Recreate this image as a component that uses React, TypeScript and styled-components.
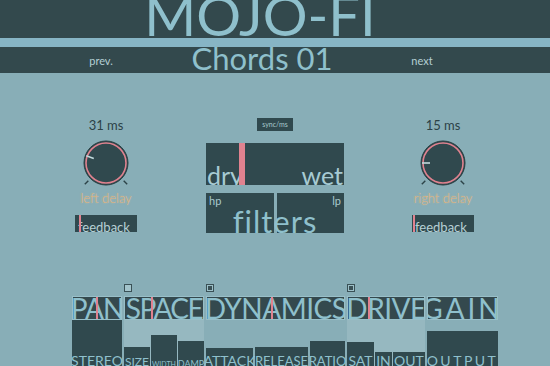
import React from 'react';
import styled, { createGlobalStyle } from 'styled-components';

const DARK = '#30494e';
const LIGHT = '#8fc0cc';
const PINK = '#e0828f';

const GlobalStyle = createGlobalStyle`
  html, body { margin: 0; padding: 0; background: #88aeb7; }
  body { font-family: Lato, "Noto Sans", sans-serif; overflow: hidden; }
`;

type Section = {
  name: string;
  width: number;
  spacing: number;
  check?: 'empty' | 'on';
  tinted?: boolean;
  marker?: number;
  bars: { label: string; w: number; h: number; size: number; ls?: number }[];
};

const sections: Section[] = [
  { name: 'PAN', width: 50, spacing: -1, marker: 23, bars: [{ label: 'STEREO', w: 50, h: 46, size: 14 }] },
  {
    name: 'SPACE', width: 80, spacing: -1.5, check: 'empty', tinted: true, marker: 26,
    bars: [
      { label: 'SIZE', w: 26, h: 19, size: 12 },
      { label: 'WIDTH', w: 26, h: 31, size: 7 },
      { label: 'DAMP', w: 26, h: 25, size: 9 },
    ],
  },
  {
    name: 'DYNAMICS', width: 139, spacing: -0.5, check: 'on', marker: 64,
    bars: [
      { label: 'ATTACK', w: 47, h: 18, size: 14 },
      { label: 'RELEASE', w: 53, h: 19, size: 13 },
      { label: 'RATIO', w: 35, h: 25, size: 13 },
    ],
  },
  {
    name: 'DRIVE', width: 78, spacing: -0.5, check: 'on', tinted: true, marker: 20,
    bars: [
      { label: 'SAT', w: 27, h: 24, size: 14 },
      { label: 'IN', w: 17, h: 14, size: 14 },
      { label: 'OUT', w: 32, h: 14, size: 14 },
    ],
  },
  { name: 'GAIN', width: 71, spacing: 3, bars: [{ label: 'OUTPUT', w: 71, h: 35, size: 14, ls: 2.5 }] },
];

function Knob({ angle }: { angle: number }) {
  const cx = 28;
  const cy = 24;
  const pt = (r: number, deg: number) => {
    const a = (deg * Math.PI) / 180;
    return [cx + r * Math.cos(a), cy + r * Math.sin(a)];
  };
  const [p1x, p1y] = pt(13, angle);
  const [p2x, p2y] = pt(21, angle);
  const [t1x, t1y] = pt(25, 135);
  const [t2x, t2y] = pt(30, 135);
  const [t3x, t3y] = pt(25, 45);
  const [t4x, t4y] = pt(30, 45);
  return (
    <svg width="56" height="52" viewBox="0 0 56 52">
      <circle cx={cx} cy={cy} r="22" fill={DARK} stroke="#283d41" strokeWidth="1" />
      <circle cx={cx} cy={cy} r="20" fill="none" stroke={PINK} strokeWidth="1.6" />
      <line x1={p1x} y1={p1y} x2={p2x} y2={p2y} stroke="#c2dadd" strokeWidth="1.6" />
      <line x1={t1x} y1={t1y} x2={t2x} y2={t2y} stroke="#2c4348" strokeWidth="1.4" />
      <line x1={t3x} y1={t3y} x2={t4x} y2={t4y} stroke="#2c4348" strokeWidth="1.4" />
    </svg>
  );
}

function DelayColumn({ value, label, angle, marker }: { value: string; label: string; angle: number; marker: number }) {
  return (
    <SideColumn>
      <Value>{value}</Value>
      <Knob angle={angle} />
      <DelayLabel>{label}</DelayLabel>
      <Feedback>
        <Marker $left={marker} />
        <FeedbackText>feedback</FeedbackText>
      </Feedback>
    </SideColumn>
  );
}

export default function App() {
  return (
    <Page>
      <GlobalStyle />
      <TitleBar>
        <Title>MOJO-FI</Title>
      </TitleBar>
      <Stripe />
      <PresetBar>
        <NavText>prev.</NavText>
        <Preset>Chords 01</Preset>
        <NavText>next</NavText>
      </PresetBar>

      <Main>
        <DelayColumn value="31 ms" label="left delay" angle={200} marker={4} />
        <CenterColumn>
          <SyncButton>sync/ms</SyncButton>
          <DryWet>
            <Big>dry</Big>
            <Big>wet</Big>
            <MixBar />
          </DryWet>
          <Filters>
            <FilterPanel>hp</FilterPanel>
            <FilterPanel $right>lp</FilterPanel>
            <FiltersTitle>filters</FiltersTitle>
          </Filters>
        </CenterColumn>
        <DelayColumn value="15 ms" label="right delay" angle={180} marker={1} />
      </Main>

      <Strip>
        {sections.map((s) => (
          <Module key={s.name} $width={s.width}>
            <CheckRow>{s.check && <Check $on={s.check === 'on'} />}</CheckRow>
            <Header $spacing={s.spacing}>
              {s.name}
              {s.marker !== undefined && <HeaderMarker $left={s.marker} />}
            </Header>
            <Body $tinted={!!s.tinted}>
              {s.bars.map((b) => (
                <Bar key={b.label} $w={b.w} $h={b.h}>
                  <BarLabel $size={b.size} $ls={b.ls ?? 0}>{b.label}</BarLabel>
                </Bar>
              ))}
            </Body>
          </Module>
        ))}
      </Strip>
    </Page>
  );
}

const Page = styled.div`
  width: 550px;
  height: 366px;
  overflow: hidden;
  background: #88aeb7;
`;

const TitleBar = styled.div`
  height: 38px;
  background: #33494d;
  display: flex;
  justify-content: center;
  align-items: flex-end;
  overflow: hidden;
`;

const Title = styled.div`
  font-size: 56px;
  font-weight: 400;
  line-height: 1;
  color: ${LIGHT};
  margin-bottom: -5px;
  margin-right: 30px;
`;

const Stripe = styled.div`
  height: 9px;
  background: #87b5c5;
`;

const PresetBar = styled.div`
  height: 26px;
  background: #33494d;
  display: grid;
  grid-template-columns: 82px 240px 80px;
  padding-left: 60px;
  justify-items: center;
  align-items: center;
`;

const NavText = styled.span`
  font-size: 11px;
  color: #b4cfd4;
  margin-top: 1px;
`;

const Preset = styled.span`
  font-size: 31px;
  font-weight: 400;
  line-height: 22px;
  color: ${LIGHT};
  align-self: start;
`;

const Main = styled.div`
  height: 209px;
  display: flex;
  padding-left: 66px;
  box-sizing: border-box;
`;

const SideColumn = styled.div`
  width: 80px;
  display: flex;
  flex-direction: column;
  align-items: center;
  padding-top: 45px;
  &:last-child {
    margin-left: 59px;
  }
`;

const Value = styled.div`
  font-size: 13px;
  line-height: 14px;
  color: #2c4247;
  margin-bottom: 7px;
`;

const DelayLabel = styled.div`
  font-size: 13px;
  font-weight: 300;
  line-height: 14px;
  color: #e0b27c;
  text-shadow: 0 0 2px rgba(240, 210, 165, 0.6);
`;

const Feedback = styled.div`
  position: relative;
  width: 62px;
  height: 17px;
  margin-top: 10px;
  background: ${DARK};
  display: flex;
  align-items: flex-end;
`;

const Marker = styled.div<{ $left: number }>`
  position: absolute;
  top: 0;
  bottom: 0;
  left: ${(p) => p.$left}px;
  width: 2px;
  background: ${PINK};
`;

const FeedbackText = styled.span`
  font-size: 13px;
  line-height: 11px;
  color: #b6d0d5;
  padding-left: 3px;
  margin-bottom: -1px;
`;

const CenterColumn = styled.div`
  width: 138px;
  margin-left: 60px;
  display: flex;
  flex-direction: column;
  padding-top: 45px;
`;

const SyncButton = styled.div`
  align-self: center;
  width: 36px;
  height: 13px;
  background: ${DARK};
  color: #a9c9cf;
  font-size: 7px;
  line-height: 13px;
  text-align: center;
`;

const DryWet = styled.div`
  position: relative;
  margin-top: 12px;
  height: 42px;
  background: ${DARK};
  display: flex;
  justify-content: space-between;
  align-items: flex-end;
  overflow: hidden;
`;

const Big = styled.span`
  font-size: 25px;
  line-height: 20px;
  color: #a7cbd3;
  padding: 0 1px;
`;

const MixBar = styled.div`
  position: absolute;
  left: 33px;
  top: 0;
  bottom: 0;
  width: 6px;
  background: ${PINK};
`;

const Filters = styled.div`
  position: relative;
  margin-top: 8px;
  height: 40px;
  display: grid;
  grid-template-columns: 68px 67px;
  column-gap: 3px;
`;

const FilterPanel = styled.div<{ $right?: boolean }>`
  background: ${DARK};
  color: #a9c9cf;
  font-size: 11px;
  line-height: 12px;
  padding: 2px 3px;
  text-align: ${(p) => (p.$right ? 'right' : 'left')};
`;

const FiltersTitle = styled.div`
  position: absolute;
  left: 0;
  right: 0;
  bottom: -2px;
  text-align: center;
  font-size: 31px;
  line-height: 28px;
  letter-spacing: 1px;
  color: ${LIGHT};
`;

const Strip = styled.div`
  display: flex;
  gap: 2px;
  padding-left: 72px;
`;

const Module = styled.div<{ $width: number }>`
  width: ${(p) => p.$width}px;
  display: flex;
  flex-direction: column;
`;

const CheckRow = styled.div`
  height: 14px;
  padding-top: 2px;
  box-sizing: border-box;
`;

const Check = styled.div<{ $on: boolean }>`
  width: 8px;
  height: 8px;
  box-sizing: border-box;
  border: 1px solid #3a5156;
  background: ${(p) => (p.$on ? `radial-gradient(#3a5156 0 0) center / 4px 4px no-repeat, #9cc0c8` : '#a3c4cb')};
`;

const Header = styled.div<{ $spacing: number }>`
  position: relative;
  height: 24px;
  box-sizing: border-box;
  background: #34494e;
  border: 1px solid #98bfc8;
  color: ${LIGHT};
  font-size: 28px;
  line-height: 24px;
  letter-spacing: ${(p) => p.$spacing}px;
  white-space: nowrap;
  overflow: hidden;
  display: flex;
  justify-content: center;
  align-items: center;
`;

const HeaderMarker = styled.div<{ $left: number }>`
  position: absolute;
  top: 0;
  bottom: 0;
  left: ${(p) => p.$left}px;
  width: 2px;
  background: ${PINK};
`;

const Body = styled.div<{ $tinted: boolean }>`
  height: 46px;
  display: flex;
  align-items: flex-end;
  justify-content: space-between;
  background: ${(p) => (p.$tinted ? '#96b8c0' : 'transparent')};
`;

const Bar = styled.div<{ $w: number; $h: number }>`
  width: ${(p) => p.$w}px;
  height: ${(p) => p.$h}px;
  background: ${DARK};
  display: flex;
  flex-direction: column;
  justify-content: flex-end;
  align-items: center;
`;

const BarLabel = styled.span<{ $size: number; $ls: number }>`
  font-size: ${(p) => p.$size}px;
  letter-spacing: ${(p) => p.$ls}px;
  line-height: ${(p) => p.$size}px;
  color: ${LIGHT};
  margin-bottom: -2px;
  white-space: nowrap;
`;
